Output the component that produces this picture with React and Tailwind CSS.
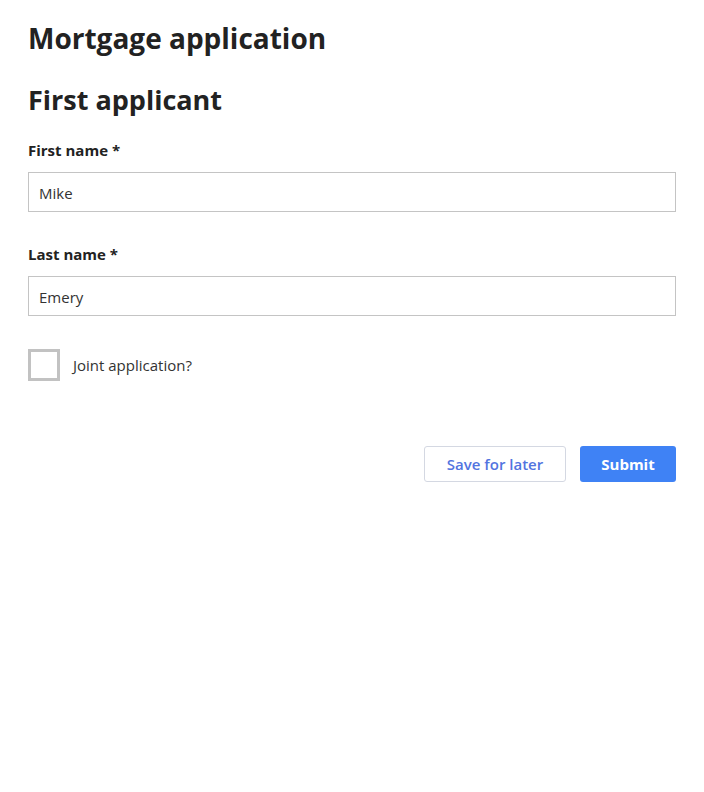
export default function App() {
    return (
        <div className="min-h-screen bg-white px-7 pt-[18px] text-[#222] font-['Open_Sans',sans-serif]">
            <h1 className="text-[28px] font-bold leading-[40px]">Mortgage application</h1>
            <h2 className="mt-[22px] text-[27px] font-bold leading-[40px]">First applicant</h2>

            <div className="mt-[20px]">
                <label className="block text-[15px] font-bold leading-5">First name *</label>
                <input
                    defaultValue="Mike"
                    className="mt-3 block h-10 w-full border border-[#c4c4c4] px-2.5 pt-px text-[15px] text-[#333] outline-none"
                />
            </div>

            <div className="mt-[32px]">
                <label className="block text-[15px] font-bold leading-5">Last name *</label>
                <input
                    defaultValue="Emery"
                    className="mt-3 block h-10 w-full border border-[#c4c4c4] px-2.5 pt-px text-[15px] text-[#333] outline-none"
                />
            </div>

            <div className="mt-[33px] flex items-center gap-[13px]">
                <span className="h-8 w-8 border-[3px] border-[#c2c2c2] bg-white" />
                <span className="text-[15px] text-[#333]">Joint application?</span>
            </div>

            <div className="mt-[65px] flex justify-end gap-[14px]">
                <button className="h-9 w-[142px] rounded-[3px] border border-[#d4d8e2] bg-white text-[15px] font-semibold text-[#5274e0]">
                    Save for later
                </button>
                <button className="h-9 w-24 rounded-[3px] bg-[#3f82f5] text-[15px] font-bold text-white">
                    Submit
                </button>
            </div>
        </div>
    );
}
